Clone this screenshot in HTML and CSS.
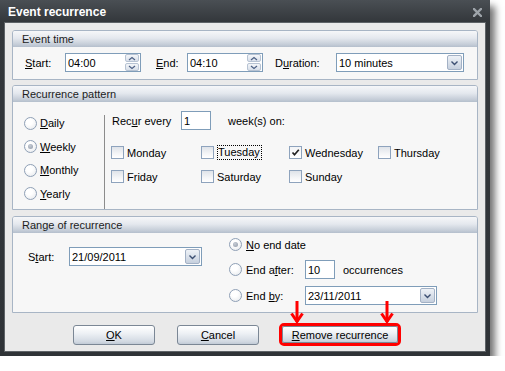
FILE: index.html
```html
<!DOCTYPE html>
<html>
<head>
<meta charset="utf-8">
<link rel="stylesheet" href="styles.css">
</head>
<body>
<div class="window">
  <div class="titlebar">
    <span class="title">Event recurrence</span>
    <svg class="close" width="9" height="9" viewBox="0 0 9 9"><path d="M1 1 L8 8 M8 1 L1 8" stroke="#9ea4aa" stroke-width="2.4" stroke-linecap="square"/></svg>
  </div>
  <div class="body">
    <section class="group g1">
      <div class="ghead">Event time</div>
      <div class="gbody time-row">
        <span class="lbl l-start"><u>S</u>tart:</span>
        <div class="field spin-field"><span class="val">04:00</span>
          <div class="spin"><div class="sb"><svg width="10" height="5" viewBox="0 0 10 5"><path d="M2 4 L5 1.5 L8 4" fill="none" stroke="#4d6185" stroke-width="1.2"/></svg></div><div class="sb"><svg width="10" height="5" viewBox="0 0 10 5"><path d="M2 1 L5 3.5 L8 1" fill="none" stroke="#4d6185" stroke-width="1.2"/></svg></div></div>
        </div>
        <span class="lbl l-end"><u>E</u>nd:</span>
        <div class="field spin-field"><span class="val">04:10</span>
          <div class="spin"><div class="sb"><svg width="10" height="5" viewBox="0 0 10 5"><path d="M2 4 L5 1.5 L8 4" fill="none" stroke="#4d6185" stroke-width="1.2"/></svg></div><div class="sb"><svg width="10" height="5" viewBox="0 0 10 5"><path d="M2 1 L5 3.5 L8 1" fill="none" stroke="#4d6185" stroke-width="1.2"/></svg></div></div>
        </div>
        <span class="lbl l-dur">D<u>u</u>ration:</span>
        <div class="field combo combo-dur"><span class="val">10 minutes</span>
          <div class="ddb"><svg width="9" height="6" viewBox="0 0 9 6"><path d="M1.5 1.5 L4.5 4.5 L7.5 1.5" fill="none" stroke="#3c4f72" stroke-width="1.4"/></svg></div>
        </div>
      </div>
    </section>

    <section class="group g2">
      <div class="ghead">Recurrence pattern</div>
      <div class="gbody pattern">
        <div class="freq">
          <div class="radio-row"><span class="radio"></span><span><u>D</u>aily</span></div>
          <div class="radio-row"><span class="radio on"></span><span><u>W</u>eekly</span></div>
          <div class="radio-row"><span class="radio"></span><span><u>M</u>onthly</span></div>
          <div class="radio-row"><span class="radio"></span><span><u>Y</u>early</span></div>
        </div>
        <div class="weekly">
          <div class="recur-row">
            <span class="l-recur">Rec<u>u</u>r every</span>
            <div class="field f-num"><span class="val">1</span></div>
            <span class="l-weeks">week(s) on:</span>
          </div>
          <div class="days">
            <div class="day"><span class="cb"></span><span>Monday</span></div>
            <div class="day"><span class="cb"></span><span class="focus">Tuesday</span></div>
            <div class="day"><span class="cb on"><svg width="11" height="11" viewBox="0 0 11 11"><path d="M2.5 5.5 L4.5 7.8 L8.8 2.8" fill="none" stroke="#222" stroke-width="1.7"/></svg></span><span>Wednesday</span></div>
            <div class="day"><span class="cb"></span><span>Thursday</span></div>
            <div class="day"><span class="cb"></span><span>Friday</span></div>
            <div class="day"><span class="cb"></span><span>Saturday</span></div>
            <div class="day"><span class="cb"></span><span>Sunday</span></div>
          </div>
        </div>
      </div>
    </section>

    <section class="group g3">
      <div class="ghead">Range of recurrence</div>
      <div class="gbody range">
        <div class="range-start">
          <span class="lbl l-rstart">S<u>t</u>art:</span>
          <div class="field combo combo-date"><span class="val">21/09/2011</span>
            <div class="ddb"><svg width="9" height="6" viewBox="0 0 9 6"><path d="M1.5 1.5 L4.5 4.5 L7.5 1.5" fill="none" stroke="#3c4f72" stroke-width="1.4"/></svg></div>
          </div>
        </div>
        <div class="range-end">
          <div class="end-row"><div class="end-lbl"><span class="radio on"></span><span><u>N</u>o end date</span></div></div>
          <div class="end-row"><div class="end-lbl"><span class="radio"></span><span>End a<u>f</u>ter:</span></div>
            <div class="field f-num"><span class="val">10</span></div><span class="l-occ">occurrences</span></div>
          <div class="end-row"><div class="end-lbl"><span class="radio"></span><span>End <u>b</u>y:</span></div>
            <div class="field combo combo-end"><span class="val">23/11/2011</span>
              <div class="ddb"><svg width="9" height="6" viewBox="0 0 9 6"><path d="M1.5 1.5 L4.5 4.5 L7.5 1.5" fill="none" stroke="#3c4f72" stroke-width="1.4"/></svg></div>
            </div>
          </div>
        </div>
      </div>
    </section>

    <div class="buttons">
      <button class="btn"><u>O</u>K</button>
      <button class="btn b-cancel"><u>C</u>ancel</button>
      <div class="highlight">
        <svg class="arrows" width="104" height="23" viewBox="0 0 104 23"><g fill="none" stroke="#ff0000" stroke-width="3"><path d="M7 0 L7 21"/><path d="M1.5 12.5 L7 20.5 L12.5 12.5"/><path d="M97 0 L97 21"/><path d="M91.5 12.5 L97 20.5 L102.5 12.5"/></g></svg>
        <button class="btn b-remove"><u>R</u>emove recurrence</button>
      </div>
    </div>
  </div>
</div>
</body>
</html>
```

FILE: styles.css
```css
* { box-sizing: border-box; }

body {
  margin: 0;
  background: #ffffff;
  font-family: "Liberation Sans", Arial, sans-serif;
  font-size: 11px;
  color: #000;
}

u { text-decoration: underline; text-underline-offset: 1px; }

.window {
  width: 490px;
  height: 356px;
  background: linear-gradient(#4a4f54, #33373b 22px, #2f3337);
  padding: 0 4px 4px;
  display: flex;
  flex-direction: column;
  box-shadow: 5px 6px 7px rgba(0, 0, 0, 0.55);
}

.titlebar {
  height: 22px;
  flex: none;
  display: flex;
  align-items: center;
  justify-content: space-between;
  padding: 1px 4px 0 4px;
  color: #ffffff;
  font-weight: bold;
  font-size: 12px;
}

.close { margin-top: 1px; }

.body {
  flex: 1;
  background: #eaeaea;
  border: 1px solid #5e6367;
  padding: 7px 7px 0;
  display: flex;
  flex-direction: column;
}

.group {
  border: 1px solid #a8b5c5;
  border-radius: 3px 3px 0 0;
  background: #f7f7f7;
  flex: none;
}

.g2 { margin-top: 5px; }
.g3 { margin-top: 6px; }

.ghead {
  height: 16px;
  line-height: 16px;
  padding-left: 9px;
  color: #1c1c1c;
  background: linear-gradient(#f6f7f9 0%, #e4e8ee 45%, #c4ccd7 85%, #b4bfcc 100%);
  border-radius: 2px 2px 0 0;
}

/* fields */
.field {
  height: 19px;
  border: 1px solid #7f9db9;
  background: #ffffff;
  display: flex;
  align-items: center;
  padding-left: 2px;
  flex: none;
}

.val { flex: 1; white-space: nowrap; }

.spin {
  width: 14px;
  height: 17px;
  margin-right: 1px;
  display: flex;
  flex-direction: column;
  justify-content: space-between;
}

.sb {
  height: 8px;
  border: 1px solid #b7c3d3;
  border-radius: 2px;
  background: linear-gradient(#f4f6f9, #d9e0ea);
  display: flex;
  align-items: center;
  justify-content: center;
}

.ddb {
  width: 15px;
  height: 15px;
  margin-right: 1px;
  border: 1px solid #a3b1c5;
  border-radius: 2px;
  background: linear-gradient(#eef2f7, #c6d0de);
  display: flex;
  align-items: center;
  justify-content: center;
}

/* event time */
.time-row {
  display: flex;
  align-items: center;
  padding: 6px 0 7px 12px;
}

.lbl { flex: none; white-space: nowrap; }
.l-start { width: 40px; }
.spin-field { width: 76px; }
.l-end { width: 31px; margin-left: 15px; }
.l-dur { width: 61px; margin-left: 12px; }
.combo-dur { width: 128px; }

/* pattern */
.pattern { display: flex; }

.freq {
  width: 92px;
  margin-top: 13px;
  padding: 0 0 7.5px 11px;
  border-right: 1px solid #8c8c8c;
  display: flex;
  flex-direction: column;
  gap: 7.5px;
}

.radio-row {
  height: 16px;
  display: flex;
  align-items: center;
  gap: 3px;
}

.radio {
  width: 13px;
  height: 13px;
  border-radius: 50%;
  border: 1px solid #8fa0b6;
  background: radial-gradient(circle at 40% 35%, #ffffff 30%, #e3e6ea 100%);
  flex: none;
  display: flex;
  align-items: center;
  justify-content: center;
}

.radio.on::after {
  content: "";
  width: 5px;
  height: 5px;
  border-radius: 50%;
  background: radial-gradient(circle at 40% 35%, #c6ccd5, #8f99a8);
}

.weekly {
  padding: 9px 0 0 6px;
  flex: 1;
}

.recur-row {
  display: flex;
  align-items: center;
}

.l-recur { width: 70px; padding-left: 1px; }
.f-num { width: 30px; }
.l-weeks { margin-left: 17px; }

.days {
  margin-top: 16px;
  display: grid;
  grid-template-columns: 90px 88px 89px auto;
  row-gap: 11px;
}

.day {
  height: 13px;
  display: flex;
  align-items: center;
  gap: 3px;
  white-space: nowrap;
}

.cb {
  width: 13px;
  height: 13px;
  border: 1px solid #8ea3bd;
  background: linear-gradient(#dfe3e9, #f4f5f7 60%, #ffffff);
  flex: none;
  display: flex;
  align-items: center;
  justify-content: center;
}

.cb.on { background: linear-gradient(#f3f4f6, #ffffff); }

.focus {
  outline: 1px dotted #000;
  outline-offset: 0;
  margin-left: 1px;
  padding: 0 1px 0 0;
  line-height: 13px;
}

/* range */
.range {
  display: flex;
  padding: 2px 0 7px 0;
}

.range-start {
  display: flex;
  align-items: center;
  align-self: flex-start;
  margin-top: 12px;
  padding-left: 15px;
}

.l-rstart { width: 41px; }
.combo-date { width: 133px; }

.range-end {
  margin-left: 27px;
  display: flex;
  flex-direction: column;
  gap: 6px;
}

.end-row {
  height: 19px;
  display: flex;
  align-items: center;
}

.end-row + .end-row + .end-row { margin-top: 1px; }

.end-lbl {
  width: 76px;
  display: flex;
  align-items: center;
  gap: 4px;
  white-space: nowrap;
}

.l-occ { margin-left: 8px; }
.combo-end { width: 132px; }

/* buttons */
.buttons {
  display: flex;
  align-items: center;
  margin-top: 10px;
  padding-left: 61px;
}

.btn {
  font-family: "Liberation Sans", Arial, sans-serif;
  font-size: 11px;
  color: #000;
  width: 82px;
  height: 20px;
  padding: 0;
  border: 1px solid #7b8795;
  border-radius: 3px;
  background: linear-gradient(#ffffff 0%, #eef1f5 40%, #d3dae3 85%, #c2cbd7 100%);
}

.b-cancel { margin-left: 22px; }

.highlight {
  position: relative;
  margin-left: 20px;
  width: 122px;
  height: 23px;
  border: 3px solid #ff0000;
  border-radius: 5px;
  display: flex;
}

.b-remove {
  width: 116px;
  height: 17px;
  border-radius: 2px;
}

.arrows {
  position: absolute;
  left: 8px;
  top: -25px;
}
```
